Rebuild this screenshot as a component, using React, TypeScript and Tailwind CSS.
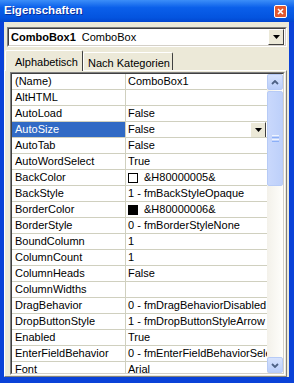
import { FC } from 'react';

type Row = { name: string; value: string; swatch?: 'white' | 'black' };

const rows: Row[] = [
  { name: '(Name)', value: 'ComboBox1' },
  { name: 'AltHTML', value: '' },
  { name: 'AutoLoad', value: 'False' },
  { name: 'AutoSize', value: 'False' },
  { name: 'AutoTab', value: 'False' },
  { name: 'AutoWordSelect', value: 'True' },
  { name: 'BackColor', value: '&H80000005&', swatch: 'white' },
  { name: 'BackStyle', value: '1 - fmBackStyleOpaque' },
  { name: 'BorderColor', value: '&H80000006&', swatch: 'black' },
  { name: 'BorderStyle', value: '0 - fmBorderStyleNone' },
  { name: 'BoundColumn', value: '1' },
  { name: 'ColumnCount', value: '1' },
  { name: 'ColumnHeads', value: 'False' },
  { name: 'ColumnWidths', value: '' },
  { name: 'DragBehavior', value: '0 - fmDragBehaviorDisabled' },
  { name: 'DropButtonStyle', value: '1 - fmDropButtonStyleArrow' },
  { name: 'Enabled', value: 'True' },
  { name: 'EnterFieldBehavior', value: '0 - fmEnterFieldBehaviorSelectText' },
  { name: 'Font', value: 'Arial' },
];

const DropArrow: FC = () => (
  <div className="w-[16px] h-[16px] shrink-0 bg-[#ECE9D8] border border-t-white border-l-white border-r-[#404040] border-b-[#404040] flex items-center justify-center">
    <svg width="7" height="4" viewBox="0 0 7 4">
      <path d="M0 0h7L3.5 4z" fill="#000" />
    </svg>
  </div>
);

const ScrollButton: FC<{ up?: boolean }> = ({ up }) => (
  <div className="h-[16px] shrink-0 rounded-[2px] border border-[#B7CBF6] bg-[linear-gradient(#D6E2FD,#BACEFA)] flex items-center justify-center">
    <svg width="8" height="5" viewBox="0 0 8 5">
      <path d={up ? 'M1 4L4 1l3 3' : 'M1 1l3 3 3-3'} stroke="#4D6185" strokeWidth="1.8" fill="none" />
    </svg>
  </div>
);

const PropRow: FC<{ row: Row; selected: boolean }> = ({ row, selected }) => (
  <div className="flex h-[16px] border-b border-[#D0D0BF] shrink-0 min-w-0">
    <div
      className={`w-[114px] shrink-0 pl-[3px] border-r border-[#D0D0BF] leading-[15px] whitespace-nowrap overflow-hidden ${
        selected ? 'bg-[#316AC5] text-white' : ''
      }`}
    >
      {row.name}
    </div>
    <div className="flex-1 min-w-0 flex items-center pl-[2px] whitespace-nowrap overflow-hidden">
      {row.swatch && (
        <span
          className={`w-[10px] h-[10px] shrink-0 border border-black mr-[6px] ${
            row.swatch === 'white' ? 'bg-white' : 'bg-black'
          }`}
        />
      )}
      <span className="leading-[15px] min-w-0">{row.value}</span>
      {selected && (
        <span className="ml-auto mr-[1px] shrink-0">
          <DropArrow />
        </span>
      )}
    </div>
  </div>
);

export default function App() {
  return (
    <div className="w-[294px] h-[383px] flex flex-col bg-[#0A42D8] font-['Liberation_Sans',Arial,sans-serif] text-[11px] text-black overflow-hidden">
      <div className="h-[22px] shrink-0 flex items-center justify-between pl-[4px] pr-[7px] bg-[linear-gradient(#3C8EF8,#0A5FEA_35%,#0454DF_80%,#0246CF)]">
        <span className="text-white font-bold text-[11.5px] [text-shadow:1px_1px_#0A2E9C]">Eigenschaften</span>
        <div className="w-[13px] h-[13px] rounded-[2px] border border-white bg-[#E2582F] flex items-center justify-center">
          <svg width="7" height="7" viewBox="0 0 7 7">
            <path d="M1 1l5 5M6 1L1 6" stroke="#fff" strokeWidth="1.6" />
          </svg>
        </div>
      </div>

      <div className="flex-1 flex pl-[4px] pr-[5px] pb-[6px] min-h-0 min-w-0">
        <div className="flex-1 flex flex-col bg-[#ECE9D8] min-h-0 min-w-0">
          <div className="mt-[5px] ml-[3px] mr-[2px] h-[20px] shrink-0 bg-white border border-t-[#808080] border-l-[#808080] border-r-white border-b-white">
            <div className="h-full flex items-center border border-t-[#404040] border-l-[#404040] border-r-[#D4D0C8] border-b-[#D4D0C8] whitespace-nowrap">
              <span className="pl-[2px] font-bold text-[11px]">ComboBox1</span>
              <span className="pl-[6px] text-[11px]">ComboBox</span>
              <span className="ml-auto mr-[1px]">
                <DropArrow />
              </span>
            </div>
          </div>

          <div className="mt-[3px] ml-[1px] h-[20px] shrink-0 flex items-end whitespace-nowrap">
            <div className="h-[21px] w-[78px] -mb-[1px] relative z-10 bg-[#ECE9D8] border-t border-l border-r border-t-white border-l-white border-r-[#404040] rounded-t-[2px] pl-[9px] pt-[3px] text-[11px]">
              Alphabetisch
            </div>
            <div className="h-[18px] w-[90px] border-t border-l border-r border-t-white border-l-white border-r-[#404040] rounded-t-[2px] pl-[4px] pt-[2px] text-[11px]">
              Nach Kategorien
            </div>
          </div>

          <div className="flex-1 min-h-0 min-w-0 mr-[2px] border border-t-white border-l-white border-r-[#808080] border-b-[#808080] pl-[5px] pr-[1px] pt-[1px] pb-[1px] flex">
            <div className="flex-1 min-h-0 min-w-0 flex border border-t-[#808080] border-l-[#808080] border-r-white border-b-white">
              <div className="flex-1 min-h-0 min-w-0 flex bg-white border border-t-[#404040] border-l-[#404040] border-r-[#D4D0C8] border-b-[#D4D0C8]">
                <div className="flex-1 min-w-0 flex flex-col overflow-hidden">
                  {rows.map((r) => (
                    <PropRow key={r.name} row={r} selected={r.name === 'AutoSize'} />
                  ))}
                </div>
                <div className="w-[16px] shrink-0 flex flex-col bg-[linear-gradient(90deg,#F3F1EA,#FEFEFB)]">
                  <ScrollButton up />
                  <div className="h-[95px] shrink-0 mt-[1px] rounded-[2px] border border-[#B7CBF6] bg-[linear-gradient(90deg,#C9D8FC,#BDD0FA)] flex items-center justify-center">
                    <div className="flex flex-col gap-[1px]">
                      <span className="block w-[7px] h-[1px] bg-[#EEF4FE]" />
                      <span className="block w-[7px] h-[1px] bg-[#8CB0F8]" />
                      <span className="block w-[7px] h-[1px] bg-[#EEF4FE]" />
                      <span className="block w-[7px] h-[1px] bg-[#8CB0F8]" />
                    </div>
                  </div>
                  <div className="flex-1" />
                  <ScrollButton />
                </div>
              </div>
            </div>
          </div>
        </div>
      </div>
    </div>
  );
}
